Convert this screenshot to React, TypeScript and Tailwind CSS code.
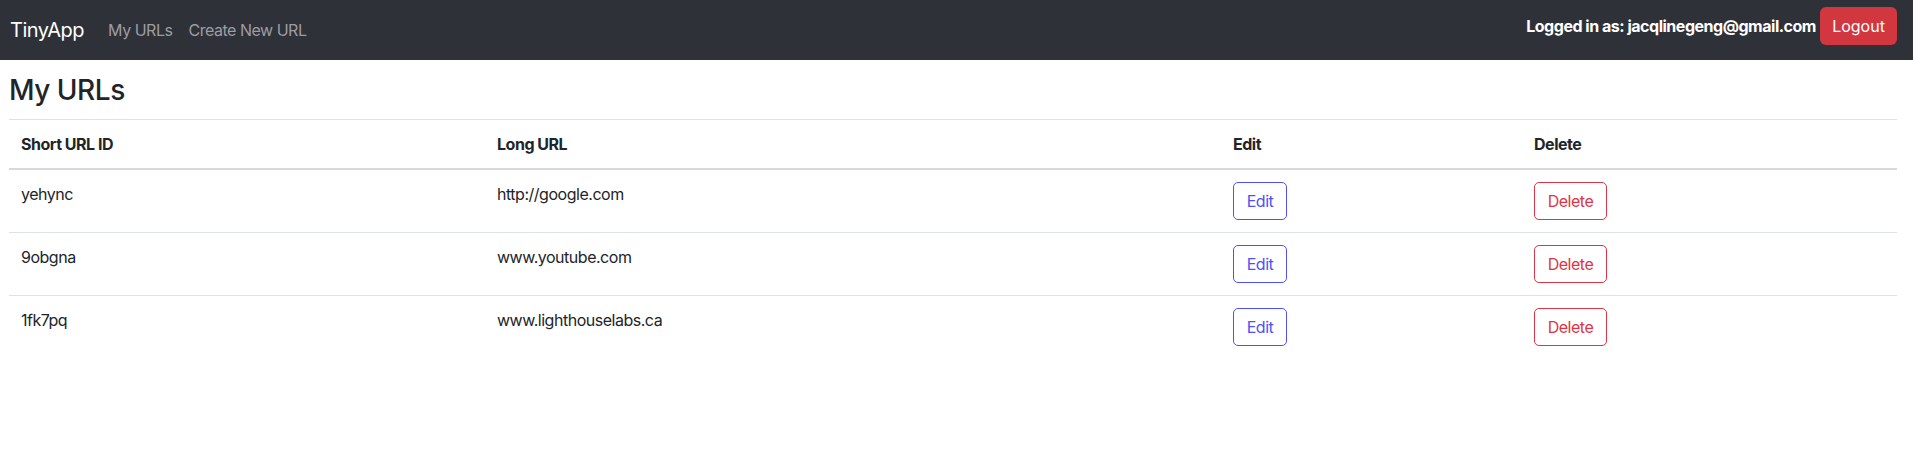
import React from 'react';

type Url = { id: string; long: string };

const urls: Url[] = [
  { id: 'yehync', long: 'http://google.com' },
  { id: '9obgna', long: 'www.youtube.com' },
  { id: '1fk7pq', long: 'www.lighthouselabs.ca' },
];

function Navbar() {
  return (
    <nav className="h-[60px] bg-[#2f3139] flex justify-between pl-[10px] pr-[16px]">
      <div className="flex items-center h-full">
        <span className="text-[20px] text-white mr-[24px]">TinyApp</span>
        <a className="text-[16px] text-[#9c9da2] mr-[16px]">My URLs</a>
        <a className="text-[16px] text-[#9c9da2]">Create New URL</a>
      </div>
      <div className="flex items-center gap-[4px] h-[50px] pt-[1px]">
        <span className="text-[16px] font-bold text-white">Logged in as: jacqlinegeng@gmail.com</span>
        <button className="h-[38px] w-[77px] rounded-[6px] bg-[#d2373f] text-white text-[16px] tracking-normal">Logout</button>
      </div>
    </nav>
  );
}

export default function App() {
  return (
    <div className="min-h-screen bg-white font-['Inter',sans-serif] tracking-[-0.03em] text-[#212529]">
      <Navbar />
      <main className="pl-[9px] pr-[16px]">
        <h3 className="text-[28px] leading-[1.2] font-medium mt-[14px] mb-[11px]">My URLs</h3>
        <table className="w-full table-fixed border-collapse text-[16px] leading-[24px]">
          <colgroup>
            <col className="w-[476px]" />
            <col className="w-[736px]" />
            <col className="w-[301px]" />
            <col />
          </colgroup>
          <thead>
            <tr className="border-t border-[#dee2e6] border-b-2 border-b-[#d6d8dc]">
              <th className="text-left font-bold p-[12px]">Short URL ID</th>
              <th className="text-left font-bold p-[12px]">Long URL</th>
              <th className="text-left font-bold p-[12px]">Edit</th>
              <th className="text-left font-bold p-[12px]">Delete</th>
            </tr>
          </thead>
          <tbody>
            {urls.map((u, i) => (
              <tr key={u.id} className={i < urls.length - 1 ? 'border-b border-[#dee2e6]' : ''}>
                <td className="p-[12px] align-top">{u.id}</td>
                <td className="p-[12px] align-top">{u.long}</td>
                <td className="p-[12px] align-top">
                  <button className="h-[38px] w-[54px] border border-[#5050f8] text-[#5050f8] rounded-[5px] bg-white">
                    Edit
                  </button>
                </td>
                <td className="p-[12px] align-top">
                  <button className="h-[38px] w-[73px] border border-[#dc3545] text-[#dc3545] rounded-[5px] bg-white">
                    Delete
                  </button>
                </td>
              </tr>
            ))}
          </tbody>
        </table>
      </main>
    </div>
  );
}
